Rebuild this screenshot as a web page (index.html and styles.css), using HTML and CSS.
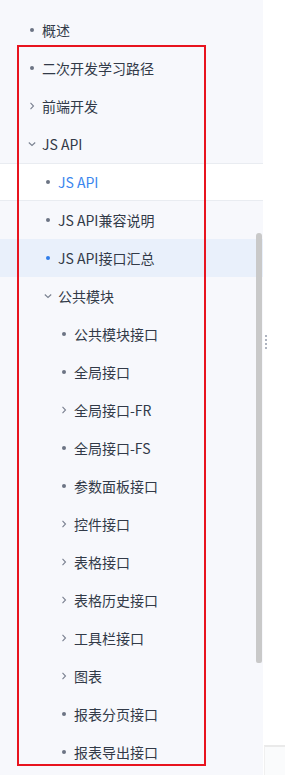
FILE: index.html
```html
<!DOCTYPE html>
<html lang="zh-CN">
<head>
  <meta charset="UTF-8" />
  <meta name="viewport" content="width=device-width, initial-scale=1.0" />
  <title>文档目录</title>
  <link rel="stylesheet" href="styles.css">
</head>
<body>
  <div class="layout">
    <aside class="sidebar">
      <ul class="tree">
        <li class="item lv1"><span class="dot"></span><span class="label">概述</span></li>
        <li class="item lv1"><span class="dot"></span><span class="label">二次开发学习路径</span></li>
        <li class="item lv1"><svg class="arrow" viewBox="0 0 8 8"><path d="M2.5 0.8 L5.5 4 L2.5 7.2" /></svg><span class="label">前端开发</span></li>
        <li class="item lv1"><svg class="arrow" viewBox="0 0 8 8"><path d="M0.8 2.5 L4 5.5 L7.2 2.5" /></svg><span class="label">JS API</span></li>
        <li class="item lv2 current"><span class="dot"></span><span class="label">JS API</span></li>
        <li class="item lv2"><span class="dot"></span><span class="label">JS API兼容说明</span></li>
        <li class="item lv2 selected"><span class="dot"></span><span class="label">JS API接口汇总</span></li>
        <li class="item lv2"><svg class="arrow" viewBox="0 0 8 8"><path d="M0.8 2.5 L4 5.5 L7.2 2.5" /></svg><span class="label">公共模块</span></li>
        <li class="item lv3"><span class="dot"></span><span class="label">公共模块接口</span></li>
        <li class="item lv3"><span class="dot"></span><span class="label">全局接口</span></li>
        <li class="item lv3"><svg class="arrow" viewBox="0 0 8 8"><path d="M2.5 0.8 L5.5 4 L2.5 7.2" /></svg><span class="label">全局接口-FR</span></li>
        <li class="item lv3"><span class="dot"></span><span class="label">全局接口-FS</span></li>
        <li class="item lv3"><span class="dot"></span><span class="label">参数面板接口</span></li>
        <li class="item lv3"><svg class="arrow" viewBox="0 0 8 8"><path d="M2.5 0.8 L5.5 4 L2.5 7.2" /></svg><span class="label">控件接口</span></li>
        <li class="item lv3"><svg class="arrow" viewBox="0 0 8 8"><path d="M2.5 0.8 L5.5 4 L2.5 7.2" /></svg><span class="label">表格接口</span></li>
        <li class="item lv3"><svg class="arrow" viewBox="0 0 8 8"><path d="M2.5 0.8 L5.5 4 L2.5 7.2" /></svg><span class="label">表格历史接口</span></li>
        <li class="item lv3"><svg class="arrow" viewBox="0 0 8 8"><path d="M2.5 0.8 L5.5 4 L2.5 7.2" /></svg><span class="label">工具栏接口</span></li>
        <li class="item lv3"><svg class="arrow" viewBox="0 0 8 8"><path d="M2.5 0.8 L5.5 4 L2.5 7.2" /></svg><span class="label">图表</span></li>
        <li class="item lv3"><span class="dot"></span><span class="label">报表分页接口</span></li>
        <li class="item lv3"><span class="dot"></span><span class="label">报表导出接口</span></li>
      </ul>
      <div class="scroll-thumb"></div>
      <div class="highlight-box"></div>
    </aside>

    <div class="content">
      <div class="drag-handle">
        <span></span><span></span><span></span><span></span>
      </div>
      <div class="content-foot"></div>
    </div>
  </div>
</body>
</html>
```

FILE: styles.css
```css
* {
  margin: 0;
  padding: 0;
  box-sizing: border-box;
}

body {
  background: #fff;
  font-family: "Noto Sans CJK SC", "Liberation Sans", sans-serif;
  height: 775px;
  overflow: hidden;
}

.layout {
  display: flex;
  height: 100%;
}

.sidebar {
  position: relative;
  width: 263px;
  flex-shrink: 0;
  background: #f7f8fc;
  overflow: hidden;
}

.tree {
  list-style: none;
  padding-top: 11px;
}

.item {
  display: flex;
  align-items: center;
  height: 38px;
  font-size: 14px;
  color: #323a48;
  white-space: nowrap;
}

.item.lv1 { padding-left: 28px; }
.item.lv2 { padding-left: 44px; }
.item.lv3 { padding-left: 60px; }

.dot,
.arrow {
  width: 8px;
  flex-shrink: 0;
  margin-right: 6px;
}

.dot {
  display: flex;
  justify-content: center;
}

.dot::before {
  content: "";
  width: 4px;
  height: 4px;
  border-radius: 50%;
  background: #6c7484;
}

.arrow {
  height: 8px;
}

.arrow path {
  fill: none;
  stroke: #7a8190;
  stroke-width: 1.1;
}

.label {
  line-height: 20px;
}

.item.current {
  background: #fff;
  border-top: 1px solid #e9ecf1;
  border-bottom: 1px solid #e9ecf1;
}

.item.current .label {
  color: #3a86ee;
}

.item.selected {
  background: #e9f0fb;
}

.item.selected .dot::before {
  background: #2f7de9;
}

.scroll-thumb {
  position: absolute;
  left: 256px;
  top: 233px;
  width: 6px;
  height: 430px;
  border-radius: 3px 3px 2px 2px;
  background: #c9c9c9;
}

.highlight-box {
  position: absolute;
  left: 17px;
  top: 45px;
  width: 189px;
  height: 721px;
  border: 2px solid #e8141f;
}

.content {
  flex: 1;
  display: flex;
  flex-direction: column;
  justify-content: space-between;
  background: #fff;
}

.drag-handle {
  display: flex;
  flex-direction: column;
  gap: 2px;
  margin: 335px 0 0 2px;
}

.drag-handle span {
  width: 2px;
  height: 2px;
  background: #aeb4c0;
}

.content-foot {
  height: 30px;
  margin-left: 1px;
  border-top: 2px solid #eaeaea;
  border-left: 1px solid #f0f0f0;
  background: #fafbfc;
}
```
